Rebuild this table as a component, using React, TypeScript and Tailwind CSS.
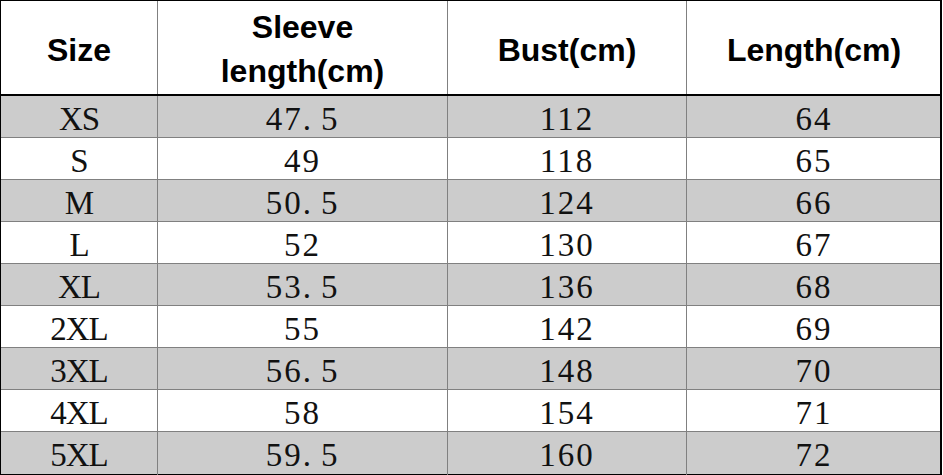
import React from "react";

const rows: [string, string, string, string][] = [
  ["XS", "47.5", "112", "64"],
  ["S", "49", "118", "65"],
  ["M", "50.5", "124", "66"],
  ["L", "52", "130", "67"],
  ["XL", "53.5", "136", "68"],
  ["2XL", "55", "142", "69"],
  ["3XL", "56.5", "148", "70"],
  ["4XL", "58", "154", "71"],
  ["5XL", "59.5", "160", "72"],
];

function Num({ v }: { v: string }) {
  const parts = v.split(".");
  if (parts.length === 1) return <>{v}</>;
  return (
    <>
      {parts[0]}
      <span className="mr-[8px]">.</span>
      {parts[1]}
    </>
  );
}

export default function App() {
  const cols = "grid grid-cols-[157px_290px_239px_254px]";
  return (
    <div className="w-[943px] h-[475px] bg-white">
      <div className="w-[942px] border-t border-l border-r-2 border-b-2 border-black">
        <div
          className={`${cols} h-[95px] border-b-2 border-black text-black font-bold text-[32px] leading-[44px]`}
          style={{ fontFamily: '"Liberation Sans", Arial, sans-serif' }}
        >
          <div className="flex items-center justify-center border-r border-[#808080] pt-[4px]">Size</div>
          <div className="flex flex-col items-center justify-center border-r border-[#808080] pt-[2px]">
            <span>Sleeve</span>
            <span>length(cm)</span>
          </div>
          <div className="flex items-center justify-center border-r border-[#808080] pt-[4px]">Bust(cm)</div>
          <div className="flex items-center justify-center pt-[4px]">Length(cm)</div>
        </div>
        {rows.map((r, i) => (
          <div
            key={r[0]}
            className={`${cols} h-[42px] ${i % 2 === 0 ? "bg-[#cccccc]" : "bg-white"} ${
              i < rows.length - 1 ? "border-b border-[#808080]" : ""
            } text-[33px] leading-[41px] text-[#111]`}
            style={{ fontFamily: '"Liberation Serif", "Times New Roman", serif' }}
          >
            <div className="flex items-center justify-center border-r border-[#808080] pt-[3px] tracking-[-1px]">{r[0]}</div>
            <div className="flex items-center justify-center border-r border-[#808080] pt-[3px] tracking-[2px]">
              <Num v={r[1]} />
            </div>
            <div className="flex items-center justify-center border-r border-[#808080] pt-[3px] tracking-[2px]">{r[2]}</div>
            <div className="flex items-center justify-center pt-[3px] tracking-[2px]">{r[3]}</div>
          </div>
        ))}
      </div>
    </div>
  );
}
